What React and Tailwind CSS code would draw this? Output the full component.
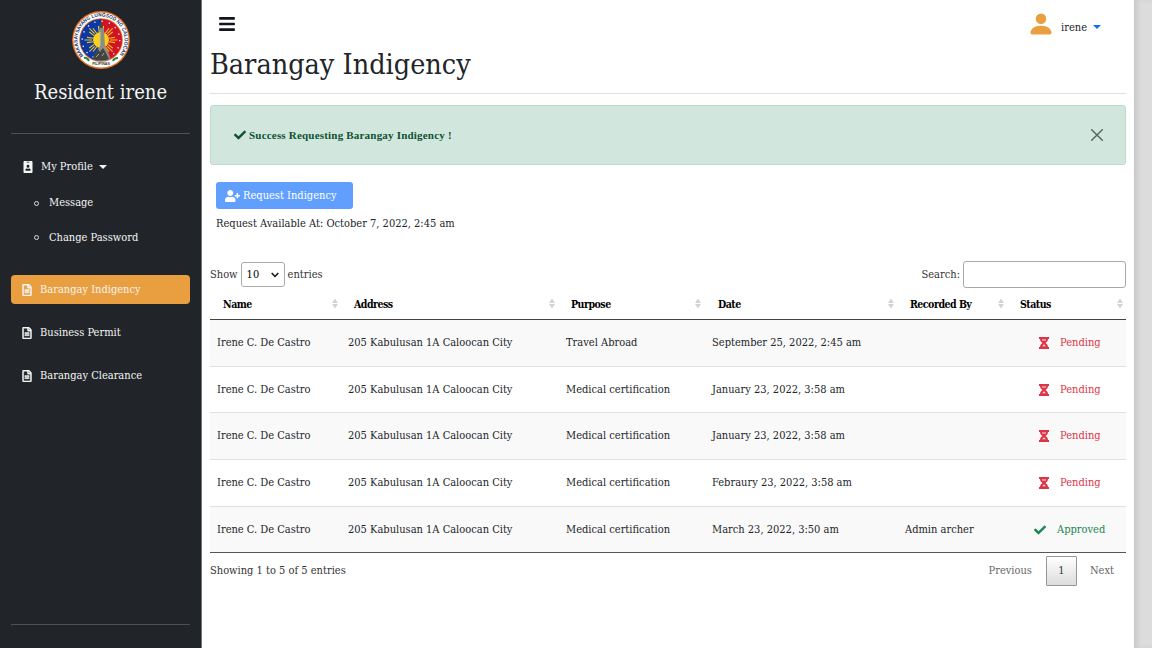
import React from "react";
import { FaIdBadge, FaRegFileAlt, FaCheck, FaUserPlus, FaBars } from "react-icons/fa";
import { BsPersonFill } from "react-icons/bs";

const rows = [
  ["Travel Abroad", "September 25, 2022, 2:45 am", "", false],
  ["Medical certification", "January 23, 2022, 3:58 am", "", false],
  ["Medical certification", "January 23, 2022, 3:58 am", "", false],
  ["Medical certification", "Febraury 23, 2022, 3:58 am", "", false],
  ["Medical certification", "March 23, 2022, 3:50 am", "Admin archer", true],
];

function Seal() {
  const rays = [0, 45, 90, 135, 180, 225, 270, 315];
  return (
    <svg className="size-[58px]" viewBox="0 0 58 58">
      <circle cx="29" cy="29" r="28.9" fill="#e8701c" />
      <circle cx="29" cy="29" r="27.6" fill="#fff" />
      <circle cx="29" cy="29" r="21.8" fill="#e8701c" />
      <path d="M29 8a21 21 0 0 0 0 42z" fill="#0b38a5" />
      <path d="M29 8a21 21 0 0 1 0 42z" fill="#d01327" />
      {rays.map((a) => (
        <path key={a} transform={`rotate(${a} 29 29)`} d="M29 20V12.500M27.200 21l-.8-6M30.800 21l.8-6" stroke="#f2c21a" strokeWidth="1.100" />
      ))}
      <circle cx="29" cy="29" r="8" fill="#fbd116" />
      <circle cx="29" cy="29" r="18.8" fill="none" stroke="#fff" strokeWidth="1.300" strokeDasharray="1.300 6.080" />
      <path d="M27 17l2-6 2 6 1 1 1 17 4 8 1.500 5.500q-9 3.500-17 0l3-8 3.500-5 .5-17.500z" fill="#8d8d88" />
      <path d="M28.500 11h1.200l1 6h-3zM22 44l4-6 2 3 3-4 3 5 3 6q-8 3-16 0z" fill="#44443f" />
      <path d="M28 19v16M24 46l3-3M30 45l2-3" stroke="#bbb" strokeWidth=".8" />
      <path id="ring" d="M11.500 44.700A23.500 23.500 0 1 1 46.500 44.700" fill="none" />
      <text fontFamily="Liberation Sans" fontSize="5.200" fontWeight="700" fill="#20336d" textLength="106" lengthAdjust="spacingAndGlyphs">
        <textPath href="#ring">MAKASAYSAYANG LUNGSOD NG CALOOCAN</textPath>
      </text>
      <path d="M12 47q3-1 5 3M41 50q1-3 5-3" stroke="#26834a" strokeWidth="2" fill="none" />
      <text x="29" y="54" fontFamily="Liberation Sans" fontSize="3.600" fontWeight="700" fill="#333" textAnchor="middle">PILIPINAS</text>
    </svg>
  );
}

function Hourglass() {
  return (
    <svg className="h-[12px] w-[10px]" viewBox="0 0 10 12">
      <path d="M0 0h10v2H0zM0 10h10v2H0z" fill="currentColor" />
      <path d="M1 2h8c0 2-1.200 3.200-2.500 4C7.800 6.800 9 8 9 10H1c0-2 1.200-3.200 2.500-4C2.200 5.200 1 4 1 2z" fill="currentColor" />
      <path d="M3 2.500h4v1H3zM3.200 9.200h3.600L5 7.300z" fill="#fbdfe2" />
    </svg>
  );
}

function Caret({ className = "" }) {
  return <svg className={`h-[4px] w-[8px] ${className}`} viewBox="0 0 8 4"><path d="M0 0h8L4 4z" fill="currentColor" /></svg>;
}

function SideLink({ label, active, className = "" }) {
  return (
    <div className={`flex h-[29px] items-center rounded-[4px] pl-[11px] ${active ? "bg-[#e99f3f]" : ""} ${className}`}>
      <FaRegFileAlt className="h-[12px] w-[10px]" stroke="currentColor" strokeWidth="20" />
      <span className="ml-[8px]">{label}</span>
    </div>
  );
}

function SubLink({ label }) {
  return (
    <div className="flex h-[34.500px] items-center pl-[23px]">
      <span className="size-[5px] rounded-full border border-[#ddd]" />
      <span className="ml-[10px]">{label}</span>
    </div>
  );
}

function Th({ label, className = "" }) {
  return (
    <div className={`flex items-center justify-between pr-[3px] font-bold text-black tracking-[-0.500px] ${className}`}>
      <span className="text-[10.500px]">{label}</span>
      <svg className="h-[11px] w-[6px]" viewBox="0 0 6 11"><path d="M0 5l3-4.500L6 5zM0 6l3 4.500L6 6z" fill="#d3d3d3" /></svg>
    </div>
  );
}

const columns = "grid grid-cols-[131px_217px_146px_193px_110px_119px]";

export default function App() {
  return (
    <div className="flex h-[648px] w-[1152px] overflow-hidden bg-white font-['DejaVu_Serif_Condensed','DejaVu_Serif',serif] text-[11px] leading-[18px] text-[#212529]">
      <aside className="flex w-[202px] shrink-0 flex-col border-r border-[#6d7276] bg-[#212529] px-[11px] text-[#f5f5f5]">
        <div className="flex justify-center pt-[11px]"><Seal /></div>
        <div className="mt-[9px] text-center text-[20px] leading-[28px] whitespace-nowrap">Resident irene</div>
        <div className="mt-[27px] border-t border-[#4d5154]" />
        <div className="mt-[18px] flex h-[29px] items-center pl-[12px]">
          <FaIdBadge className="h-[12px] w-[10px]" />
          <span className="ml-[8px]">My Profile</span>
          <Caret className="ml-[6px]" />
        </div>
        <div className="mt-[5px]">
          <SubLink label="Message" />
          <SubLink label="Change Password" />
        </div>
        <SideLink label="Barangay Indigency" active className="mt-[20px]" />
        <SideLink label="Business Permit" className="mt-[14px]" />
        <SideLink label="Barangay Clearance" className="mt-[14px]" />
        <div className="mt-auto mb-[23px] border-t border-[#4d5154]" />
      </aside>

      <main className="flex w-[932px] shrink-0 flex-col pr-[8px] pl-[8px]">
        <header className="flex h-[48px] items-center justify-between pr-[25px] pl-[9px]">
          <FaBars className="h-[18px] w-[16px] text-[#111418]" />
          <div className="flex items-center">
            <BsPersonFill className="size-[28px] text-[#e99f3f]" />
            <span className="mt-[8px] ml-[6px]">irene</span>
            <Caret className="mt-[5px] ml-[6px] text-[#0d6efd]" />
          </div>
        </header>
        <h1 className="mt-[-3px] h-[48px] text-[28.500px] leading-[40px] whitespace-nowrap">Barangay Indigency</h1>
        <div className="border-t border-[#dedfe0]" />
        <div className="mt-[11px] flex h-[60px] items-center justify-between rounded-[3px] border border-[#badbcc] bg-[#d1e7dd] pr-[22px] pl-[23px] text-[#0f5132]">
          <div className="flex items-center font-['Liberation_Serif',serif] text-[11px] font-bold tracking-[0.200px]">
            <FaCheck className="size-[12px]" />
            <span className="ml-[3px]">Success Requesting Barangay Indigency !</span>
          </div>
          <svg className="size-[12px]" viewBox="0 0 12 12"><path d="M.7.7l10.600 10.600M11.300.7L.7 11.300" stroke="#5d6663" strokeWidth="1.500" strokeLinecap="round" /></svg>
        </div>
        <div className="mt-[17px] ml-[6px] flex h-[27px] w-[137px] items-center rounded-[3px] bg-[#619fff] pl-[9px] text-white">
          <FaUserPlus className="h-[12px] w-[15px]" />
          <span className="ml-[3px] whitespace-nowrap">Request Indigency</span>
        </div>
        <div className="mt-[6px] ml-[6px]">Request Available At: October 7, 2022, 2:45 am</div>

        <div className="mt-[28px] flex h-[27px] items-center justify-between text-[#333]">
          <div className="flex items-center">
            <span>Show</span>
            <div className="mx-[3px] flex h-[25px] w-[44px] items-center justify-between rounded-[3px] border border-[#aaa] pr-[5px] pl-[5px] text-black">
              <span>10</span>
              <svg className="h-[6px] w-[8px]" viewBox="0 0 8 6"><path d="M.7 1l3.300 3.500L7.300 1" fill="none" stroke="#111" strokeWidth="1.500" /></svg>
            </div>
            <span>entries</span>
          </div>
          <div className="flex items-center">
            <span>Search:</span>
            <div className="ml-[3px] h-[27px] w-[163px] rounded-[3px] border border-[#aaa] bg-white" />
          </div>
        </div>

        <div className={`${columns} h-[32px] border-b border-[#444]`}>
          <Th label="Name" className="pl-[13px]" />
          <Th label="Address" className="pl-[13px]" />
          <Th label="Purpose" className="pl-[13px]" />
          <Th label="Date" className="pl-[14px]" />
          <Th label="Recorded By" className="pl-[13px]" />
          <Th label="Status" className="pl-[13px]" />
        </div>
        {rows.map(([purpose, date, by, approved], i) => (
          <div key={i} className={`${columns} h-[46.700px] items-center whitespace-nowrap ${i % 2 ? "bg-white" : "bg-[#f9f9f9]"} ${i === 4 ? "border-b border-[#555]" : "border-b border-[#dfe0e1]"}`}>
            <span className="pl-[7px]">Irene C. De Castro</span>
            <span className="pl-[7px]">205 Kabulusan 1A Caloocan City</span>
            <span className="pl-[8px]">{purpose}</span>
            <span className="pl-[8px]">{date}</span>
            <span className="pl-[8px]">{by}</span>
            {approved ? (
              <span className="flex items-center pl-[27px] text-[#198754]"><FaCheck className="size-[12px]" /><span className="ml-[11px]">Approved</span></span>
            ) : (
              <span className="flex items-center pl-[32px] text-[#dc3545]"><Hourglass /><span className="ml-[11px]">Pending</span></span>
            )}
          </div>
        ))}
        <div className="mt-[2px] flex h-[31px] items-center justify-between text-[#333]">
          <span>Showing 1 to 5 of 5 entries</span>
          <div className="flex items-center pr-[12px] text-[#666]">
            <span>Previous</span>
            <div className="mr-[13px] ml-[14px] flex h-[30px] w-[31px] items-center justify-center rounded-[1px] border border-[#979797] bg-linear-to-b from-white to-[#dcdcdc] text-[#333]">1</div>
            <span>Next</span>
          </div>
        </div>
      </main>
      <div className="flex-1 border-l border-[#c8c8c8] bg-[#dcdcdc] shadow-[inset_3px_0_4px_#cccccc]" />
    </div>
  );
}
